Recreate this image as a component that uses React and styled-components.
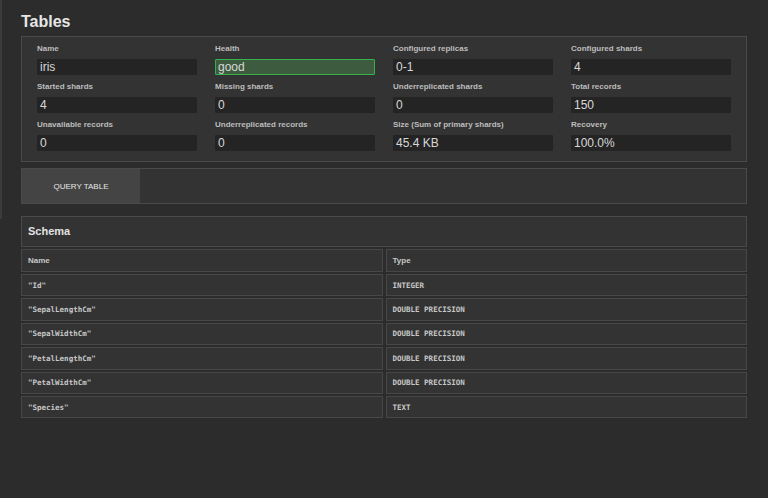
import React from 'react';
import styled, { createGlobalStyle } from 'styled-components';

const GlobalStyle = createGlobalStyle`
  html, body {
    margin: 0;
    background: #2c2c2c;
    font-family: "Liberation Sans", Arial, sans-serif;
    color: #ddd;
  }
`;

const Page = styled('div')`
  display: flex;
  min-height: 498px;
`;

const Rail = styled('div')`
  width: 2px;
  height: 219px;
  background: #3b3b3b;
  flex: none;
`;

const Main = styled('main')`
  flex: 1;
  padding: 12px 22px 0 19px;
`;

const Title = styled('h1')`
  margin: 0 0 4px;
  font-size: 16px;
  line-height: 20px;
  font-weight: bold;
  color: #e6e6e6;
`;

const Panel = styled('section')`
  background: #333;
  border: 1px solid #4a4a4a;
  margin-top: ${(p) => p.$gap || 0}px;
`;

const InfoGrid = styled('div')`
  display: grid;
  grid-template-columns: repeat(4, 160px);
  column-gap: 18px;
  row-gap: 6px;
  padding: 6px 15px 10px;
`;

const Field = styled('div')`
  display: flex;
  flex-direction: column;
`;

const Label = styled('label')`
  font-size: 8px;
  line-height: 12px;
  font-weight: bold;
  color: #bdbdbd;
  margin-bottom: 4px;
  white-space: nowrap;
`;

const Value = styled('div')`
  box-sizing: border-box;
  height: 16px;
  padding: 0 3px;
  font-size: 12px;
  line-height: 16px;
  color: #d8d8d8;
  background: ${(p) => (p.$ok ? '#3d5c3f' : '#242424')};
  border: ${(p) => (p.$ok ? '1px solid #34b04e' : 'none')};
  line-height: ${(p) => (p.$ok ? '14px' : '16px')};
  padding-left: ${(p) => (p.$ok ? '2px' : '3px')};
  border-radius: 1px;
`;

const Actions = styled('div')`
  display: flex;
  height: 34px;
`;

const Button = styled('button')`
  width: 118px;
  height: 34px;
  border: none;
  background: #444;
  color: #e6e6e6;
  font-family: "Liberation Sans", Arial, sans-serif;
  font-size: 8px;
  padding: 0;
  cursor: pointer;
`;

const PanelTitle = styled('h2')`
  margin: 0;
  padding: 0 6px;
  font-size: 11px;
  line-height: 29px;
  font-weight: bold;
  color: #e2e2e2;
`;

const Table = styled('div')`
  display: grid;
  grid-template-columns: 1fr 1fr;
  column-gap: 3px;
  row-gap: 2px;
  margin-top: 2px;
`;

const Cell = styled('div')`
  box-sizing: border-box;
  height: ${(p) => (p.$head ? 23 : 22.4)}px;
  display: flex;
  align-items: center;
  padding: 0 6px;
  background: #333;
  border: 1px solid #474747;
  font-family: ${(p) =>
    p.$head ? '"Liberation Sans", Arial, sans-serif' : '"DejaVu Sans Mono", monospace'};
  font-size: ${(p) => (p.$head ? 8 : 7.5)}px;
  font-weight: bold;
  color: #c8c8c8;
`;

const fields = [
  { label: 'Name', value: 'iris' },
  { label: 'Health', value: 'good', ok: true },
  { label: 'Configured replicas', value: '0-1' },
  { label: 'Configured shards', value: '4' },
  { label: 'Started shards', value: '4' },
  { label: 'Missing shards', value: '0' },
  { label: 'Underreplicated shards', value: '0' },
  { label: 'Total records', value: '150' },
  { label: 'Unavailable records', value: '0' },
  { label: 'Underreplicated records', value: '0' },
  { label: 'Size (Sum of primary shards)', value: '45.4 KB' },
  { label: 'Recovery', value: '100.0%' },
];

const columns = [
  ['"Id"', 'INTEGER'],
  ['"SepalLengthCm"', 'DOUBLE PRECISION'],
  ['"SepalWidthCm"', 'DOUBLE PRECISION'],
  ['"PetalLengthCm"', 'DOUBLE PRECISION'],
  ['"PetalWidthCm"', 'DOUBLE PRECISION'],
  ['"Species"', 'TEXT'],
];

const App = () => (
  <Page>
    <GlobalStyle />
    <Rail />
    <Main>
      <Title>Tables</Title>
      <Panel>
        <InfoGrid>
          {fields.map((f) => (
            <Field key={f.label}>
              <Label>{f.label}</Label>
              <Value $ok={f.ok}>{f.value}</Value>
            </Field>
          ))}
        </InfoGrid>
      </Panel>
      <Panel $gap={6}>
        <Actions>
          <Button>QUERY TABLE</Button>
        </Actions>
      </Panel>
      <Panel $gap={12}>
        <PanelTitle>Schema</PanelTitle>
      </Panel>
      <Table>
        <Cell $head>Name</Cell>
        <Cell $head>Type</Cell>
        {columns.map(([name, type]) => (
          <React.Fragment key={name}>
            <Cell>{name}</Cell>
            <Cell>{type}</Cell>
          </React.Fragment>
        ))}
      </Table>
    </Main>
  </Page>
);

export default App;
